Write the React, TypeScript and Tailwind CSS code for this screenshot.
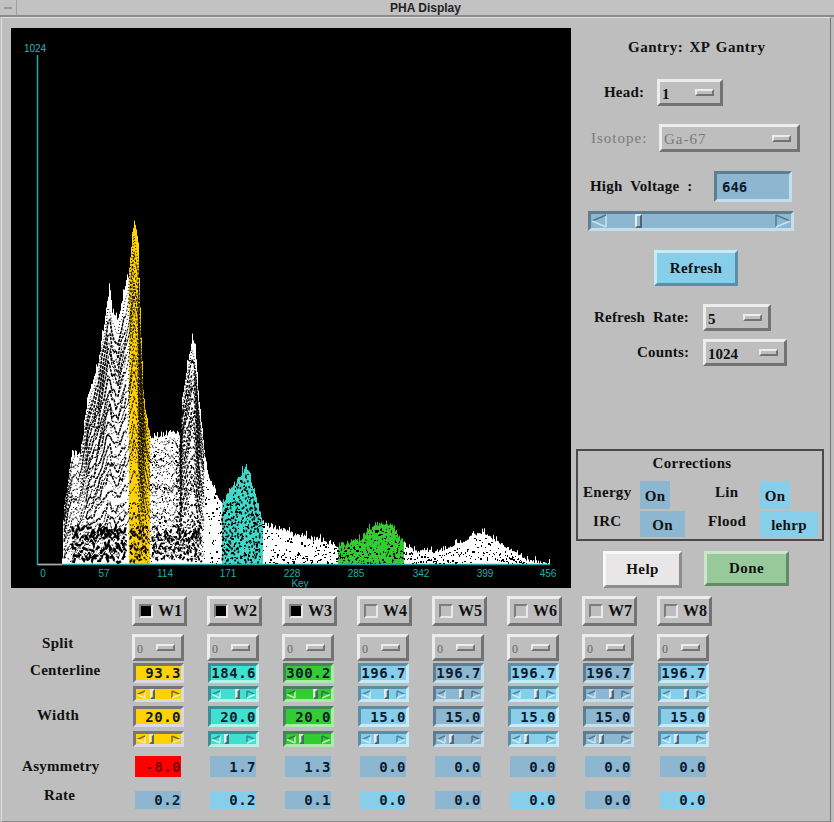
import { useMemo } from 'react'

const serif = "font-['Liberation_Serif',serif] font-bold text-[#111]"
const mono = "font-['DejaVu_Sans_Mono',monospace] font-bold text-[#0c1c30]"
const raised = 'border-t-[#ececec] border-l-[#ececec] border-r-[#737373] border-b-[#737373]'

type Tone = { bg: string; edge: string; arrowDark: string; arrowLight: string }

const TONES: Record<string, Tone> = {
  yellow: { bg: 'bg-[#ffd200]', edge: 'border-t-[#75757a] border-l-[#75757a] border-r-[#d8d8e8] border-b-[#d8d8e8]', arrowDark: '#7a6c20', arrowLight: '#f0e8c0' },
  teal: { bg: 'bg-[#40e0d0]', edge: 'border-t-[#3f8d92] border-l-[#3f8d92] border-r-[#b4f2ea] border-b-[#b4f2ea]', arrowDark: '#2f8f90', arrowLight: '#c4f8f0' },
  green: { bg: 'bg-[#32cd32]', edge: 'border-t-[#4d8063] border-l-[#4d8063] border-r-[#a8eca8] border-b-[#a8eca8]', arrowDark: '#2c7c40', arrowLight: '#b8f0b8' },
  sky: { bg: 'bg-[#87ceeb]', edge: 'border-t-[#5c8ea6] border-l-[#5c8ea6] border-r-[#c4ebf8] border-b-[#c4ebf8]', arrowDark: '#4f88a4', arrowLight: '#c8eef8' },
  steel: { bg: 'bg-[#8db7d0]', edge: 'border-t-[#5f7d92] border-l-[#5f7d92] border-r-[#c4dfec] border-b-[#c4dfec]', arrowDark: '#557890', arrowLight: '#c8e4f0' },
}

const WINDOWS = [
  { name: 'W1', on: true, tone: 'yellow', center: '93.3', width: '20.0', asym: '-8.0', rate: '0.2', rateTone: 'bg-[#8db7d0]', thumb: 14 },
  { name: 'W2', on: true, tone: 'teal', center: '184.6', width: '20.0', asym: '1.7', rate: '0.2', rateTone: 'bg-[#87ceeb]', thumb: 24 },
  { name: 'W3', on: true, tone: 'green', center: '300.2', width: '20.0', asym: '1.3', rate: '0.1', rateTone: 'bg-[#8db7d0]', thumb: 27 },
  { name: 'W4', on: false, tone: 'sky', center: '196.7', width: '15.0', asym: '0.0', rate: '0.0', rateTone: 'bg-[#87ceeb]', thumb: 23 },
  { name: 'W5', on: false, tone: 'steel', center: '196.7', width: '15.0', asym: '0.0', rate: '0.0', rateTone: 'bg-[#8db7d0]', thumb: 23 },
  { name: 'W6', on: false, tone: 'sky', center: '196.7', width: '15.0', asym: '0.0', rate: '0.0', rateTone: 'bg-[#87ceeb]', thumb: 23 },
  { name: 'W7', on: false, tone: 'steel', center: '196.7', width: '15.0', asym: '0.0', rate: '0.0', rateTone: 'bg-[#8db7d0]', thumb: 23 },
  { name: 'W8', on: false, tone: 'sky', center: '196.7', width: '15.0', asym: '0.0', rate: '0.0', rateTone: 'bg-[#87ceeb]', thumb: 23 },
]

// outline of the summed spectrum, in page pixels
const ENVELOPE: [number, number][] = [
  [62, 564], [63, 518], [65, 497], [72, 453], [80, 452], [83, 433], [86, 410], [88, 397], [98, 363], [106, 310],
  [109, 288], [112, 310], [118, 320], [122, 300], [128, 277], [134, 218], [138, 243], [140, 310], [143, 390],
  [145, 410], [150, 437], [167, 433], [180, 433], [182, 397], [187, 367], [192, 340], [195, 343], [198, 390],
  [202, 430], [207, 473], [222, 503], [223, 500], [237, 480], [246, 465], [253, 487], [260, 513], [263, 523],
  [277, 528], [287, 532], [303, 537], [323, 540], [338, 545], [360, 540], [370, 527], [382, 522], [393, 525],
  [403, 543], [413, 550], [437, 552], [460, 543], [473, 535], [483, 533], [500, 543], [527, 560], [549, 564],
]

function envelopeAt(x: number) {
  for (let i = 1; i < ENVELOPE.length; i++) {
    const [x0, y0] = ENVELOPE[i - 1]
    const [x1, y1] = ENVELOPE[i]
    if (x <= x1) return y0 + ((y1 - y0) * (x - x0)) / (x1 - x0)
  }
  return 564
}

type Trace = { points: string; width: number; dash?: string; stroke: string }

function Spectrum() {
  const { columns, traces, dots } = useMemo(() => {
    let seed = 17
    const rand = () => {
      seed = (seed * 16807) % 2147483647
      return seed / 2147483647
    }
    const columns: { x: number; y: number; fill: string }[] = []
    for (let x = 62; x <= 549; x++) {
      const fill = x >= 129 && x <= 149 ? '#ffd200' : x >= 222 && x <= 262 ? '#40d8c8' : x >= 338 && x <= 403 ? '#30cc30' : '#fff'
      const spike = rand() < 0.12 ? -4 : 0
      const y = envelopeAt(x) + (rand() - 0.5) * (x < 420 ? 6 : 3) + spike
      columns.push({ x, y: Math.min(y, 564), fill })
    }

    const traces: Trace[] = []
    const wiggle = (from: number, to: number, yAt: (x: number) => number, noise: number) => {
      const pts: string[] = []
      for (let x = from; x < to; x += 2) pts.push(`${x},${(yAt(x) + (rand() - 0.5) * noise).toFixed(1)}`)
      return pts.join(' ')
    }

    // stacked spectra: each one is the outline scaled down, drawn in broken black
    const dashes = ['2 2', '1 2', '3 1', '2 1', '1 3']
    for (let k = 0; k < 22; k++) {
      const level = 0.06 + k * 0.042
      traces.push({
        points: wiggle(64, 205, x => 564 - (564 - envelopeAt(x)) * level, 8),
        width: 1,
        dash: dashes[k % dashes.length],
        stroke: '#000',
      })
    }
    // the two big photopeak flanks read almost solid black
    for (let k = 0; k < 16; k++) {
      const level = 0.12 + k * 0.052
      traces.push({ points: wiggle(86, 128, x => 564 - (564 - envelopeAt(x)) * level, 9), width: 1.4, dash: '3 1', stroke: '#000' })
      traces.push({ points: wiggle(176, 202, x => 564 - (564 - envelopeAt(x)) * level, 9), width: 1.3, dash: '3 2', stroke: '#000' })
      traces.push({ points: wiggle(130, 148, x => 564 - (564 - envelopeAt(x)) * level, 8), width: 1, dash: '2 3', stroke: '#1a1400' })
    }
    // teal window: heavier specks so they hold up against the fill
    for (let k = 0; k < 14; k++) {
      const level = 0.05 + k * 0.062
      traces.push({ points: wiggle(222, 262, x => 564 - (564 - envelopeAt(x)) * level, 10), width: 1.6, dash: '2 4', stroke: '#000' })
    }
    // dark base of the left half with the lowest spectra showing through
    ;[558, 553, 548, 542, 536, 530].forEach(y => {
      traces.push({ points: wiggle(72, 128, () => y, 10), width: 2.4, dash: '6 2', stroke: '#000' })
      traces.push({ points: wiggle(130, 150, () => y, 10), width: 1.8, dash: '4 2', stroke: '#000' })
      traces.push({ points: wiggle(152, 204, () => y, 12), width: 1.8, dash: '4 3', stroke: '#000' })
    })
    ;[553, 541].forEach(y => {
      traces.push({ points: wiggle(68, 128, () => y, 7), width: 1, stroke: '#fff' })
      traces.push({ points: wiggle(128, 150, () => y + 2, 9), width: 1, stroke: '#ffd200' })
      traces.push({ points: wiggle(150, 205, () => y + 3, 7), width: 1, stroke: '#fff' })
    })

    const dots: { x: number; y: number; w: number; h: number }[] = []
    for (let x = 150; x <= 545; x++) {
      const perColumn = x >= 222 && x <= 262 ? 3 : x < 222 ? 2 : x >= 338 && x <= 403 ? 2.5 : x < 340 ? 1.2 : 0.8
      for (let n = 0; n < perColumn + rand() - 0.5; n++) {
        const top = envelopeAt(x)
        dots.push({ x, y: Math.round(top + 3 + rand() * (562 - top)), w: rand() < 0.3 ? 2 : 1, h: rand() < 0.4 ? 2 : 1 })
      }
    }
    return { columns, traces, dots }
  }, [])

  const ticks = [
    [43, '0'], [104, '57'], [165, '114'], [228, '171'], [292, '228'], [356, '285'], [421, '342'], [485, '399'], [548, '456'],
  ] as const

  return (
    <svg viewBox="11 28 560 560" className="block h-[560px] w-[560px] bg-black">
      {columns.map(c => (
        <rect key={c.x} x={c.x} y={c.y} width="1" height={564 - c.y} fill={c.fill} />
      ))}
      {traces.map((t, i) => (
        <polyline key={i} points={t.points} fill="none" stroke={t.stroke} strokeWidth={t.width} strokeDasharray={t.dash} />
      ))}
      {dots.map((d, i) => (
        <rect key={i} x={d.x} y={d.y} width={d.w} height={d.h} fill="#000" />
      ))}
      <line x1="37.5" y1="55" x2="37.5" y2="565" stroke="#1ca8a4" strokeWidth="1.5" />
      <line x1="37" y1="564.5" x2="550" y2="564.5" stroke="#1ca8a4" strokeWidth="1.5" />
      <line x1="38" y1="564.5" x2="62" y2="564.5" stroke="#a8a8a8" strokeWidth="1.5" />
      <text x="35" y="52" textAnchor="middle" fill="#2bb5b0" className="font-['Liberation_Sans',sans-serif] text-[10px]">1024</text>
      {ticks.map(([x, label]) => (
        <text key={label} x={x} y="577" textAnchor="middle" fill="#1cb0ac" className="font-['Liberation_Sans',sans-serif] text-[10px]">
          {label}
        </text>
      ))}
      <text x="300" y="587" textAnchor="middle" fill="#1cb0ac" className="font-['Liberation_Sans',sans-serif] text-[10px]">Key</text>
    </svg>
  )
}

function Arrow({ dir, dark, light, size = 'small' }: { dir: 'left' | 'right'; dark: string; light: string; size?: 'small' | 'large' }) {
  const w = size === 'large' ? 16 : 10
  const h = size === 'large' ? 14 : 9
  const d = dir === 'left' ? `M${w - 1} 1 L1 ${h / 2}` : `M1 1 L${w - 1} ${h / 2}`
  const lower = dir === 'left' ? `M1 ${h / 2} L${w - 1} ${h - 1}` : `M${w - 1} ${h / 2} L1 ${h - 1}`
  const closing = dir === 'left' ? `M${w - 1} 1 V${h - 1}` : `M1 1 V${h - 1}`
  return (
    <svg width={w} height={h} className="shrink-0">
      <path d={closing} stroke={dir === 'left' ? light : dark} strokeWidth="1.5" fill="none" />
      <path d={d} stroke={dark} strokeWidth="1.5" fill="none" />
      <path d={lower} stroke={light} strokeWidth="1.5" fill="none" />
    </svg>
  )
}

function Thumb({ left, tone, large }: { left: number; tone: string; large?: boolean }) {
  return (
    <span
      className={`absolute top-0 border-2 border-t-[#e8e8e8] border-l-[#e8e8e8] border-r-[#55636e] border-b-[#55636e] ${tone} ${
        large ? 'h-[14px] w-[7px]' : 'h-[10px] w-[5px]'
      }`}
      style={{ left }}
    />
  )
}

function Dropdown({ value, className, disabled, small }: { value: string; className: string; disabled?: boolean; small?: boolean }) {
  return (
    <div className={`flex items-center justify-between border-[3px] bg-[#bebebe] ${raised} ${className}`}>
      <span
        className={
          small
            ? "pl-[2px] pt-[2px] font-['Liberation_Serif',serif] text-[12px] text-[#666]"
            : `pl-[2px] pt-[3px] font-['Liberation_Serif',serif] text-[15px] leading-none ${disabled ? 'font-normal tracking-[1px] text-[#7a7a7a]' : 'font-bold text-[#111]'}`
        }
      >
        {value}
      </span>
      <span className={`mr-[6px] h-[7px] w-[19px] border-2 bg-[#bebebe] ${raised}`} />
    </div>
  )
}

function ToggleButton({ name, on }: { name: string; on: boolean }) {
  return (
    <div className={`flex h-[30px] w-[55px] items-center border-[3px] bg-[#bebebe] pl-[4px] ${raised}`}>
      <span
        className={`h-[14px] w-[14px] border-2 border-t-[#7d7d7d] border-l-[#7d7d7d] border-r-[#e8e8e8] border-b-[#e8e8e8] ${
          on ? 'bg-black' : 'bg-[#bebebe]'
        }`}
      />
      <span className={`ml-[5px] text-[16px] leading-none ${serif}`}>{name}</span>
    </div>
  )
}

function ValueField({ value, tone, height }: { value: string; tone: Tone; height: string }) {
  return (
    <div className={`flex w-[51px] items-center justify-end border-[3px] text-[14px] leading-none tracking-[0.5px] ${mono} ${tone.bg} ${tone.edge} ${height}`}>
      {value}
    </div>
  )
}

function SmallSlider({ tone, thumb }: { tone: Tone; thumb: number }) {
  return (
    <div className={`relative flex h-[16px] w-[51px] items-center justify-between border-[3px] ${tone.bg} ${tone.edge}`}>
      <Arrow dir="left" dark={tone.arrowDark} light={tone.arrowLight} />
      <Thumb left={thumb} tone={tone.bg} />
      <Arrow dir="right" dark={tone.arrowDark} light={tone.arrowLight} />
    </div>
  )
}

function ReadOut({ value, className }: { value: string; className: string }) {
  return <div className={`flex w-[46px] items-center justify-end text-[14px] leading-none tracking-[0.5px] ${mono} ${className}`}>{value}</div>
}

function Cell({ label, labelClass, height, className, children }: { label?: string; labelClass?: string; height: string; className?: string; children: React.ReactNode }) {
  return (
    <div className={`flex ${height} ${className ?? ''}`}>
      <div className={`w-[130px] shrink-0 text-[15px] leading-none tracking-[0.3px] ${serif} ${labelClass ?? ''}`}>{label}</div>
      {children}
    </div>
  )
}

function Slot({ children }: { children: React.ReactNode }) {
  return <div className="w-[75px] shrink-0">{children}</div>
}

function WindowsTable() {
  return (
    <div className="mt-[8px] flex flex-col">
      <Cell height="h-[30px]">
        {WINDOWS.map(w => (
          <Slot key={w.name}><ToggleButton name={w.name} on={w.on} /></Slot>
        ))}
      </Cell>
      <Cell height="h-[27px]" className="mt-[8px]" label="Split" labelClass="pl-[40px] pt-[2px]">
        {WINDOWS.map(w => (
          <Slot key={w.name}><Dropdown value="0" small className="h-[27px] w-[52px]" /></Slot>
        ))}
      </Cell>
      <Cell height="h-[20px]" className="mt-[2px]" label="Centerline" labelClass="pl-[28px]">
        {WINDOWS.map(w => (
          <Slot key={w.name}><div className="pl-[1px]"><ValueField value={w.center} tone={TONES[w.tone]} height="h-[20px]" /></div></Slot>
        ))}
      </Cell>
      <Cell height="h-[16px]" className="mt-[3px]">
        {WINDOWS.map(w => (
          <Slot key={w.name}><div className="pl-[1px]"><SmallSlider tone={TONES[w.tone]} thumb={w.thumb} /></div></Slot>
        ))}
      </Cell>
      <Cell height="h-[21px]" className="mt-[4px]" label="Width" labelClass="pl-[35px] pt-[2px]">
        {WINDOWS.map(w => (
          <Slot key={w.name}><div className="pl-[1px]"><ValueField value={w.width} tone={TONES[w.tone]} height="h-[21px]" /></div></Slot>
        ))}
      </Cell>
      <Cell height="h-[16px]" className="mt-[4px]">
        {WINDOWS.map(w => (
          <Slot key={w.name}><div className="pl-[1px]"><SmallSlider tone={TONES[w.tone]} thumb={13} /></div></Slot>
        ))}
      </Cell>
      <Cell height="h-[21px]" className="mt-[9px]" label="Asymmetry" labelClass="pl-[20px] pt-[3px]">
        {WINDOWS.map(w => (
          <Slot key={w.name}>
            <div className="pl-[3px]">
              <ReadOut value={w.asym} className={`h-[21px] ${w.asym === '-8.0' ? 'bg-[#ff0000] text-[#7a0a10]' : 'bg-[#8db7d0]'}`} />
            </div>
          </Slot>
        ))}
      </Cell>
      <Cell height="h-[18px]" className="mt-[14px]" label="Rate" labelClass="pl-[42px] -mt-[3px]">
        {WINDOWS.map(w => (
          <Slot key={w.name}>
            <div className="pl-[3px]"><ReadOut value={w.rate} className={`h-[18px] ${w.rateTone}`} /></div>
          </Slot>
        ))}
      </Cell>
    </div>
  )
}

function Corrections() {
  const label = `text-[15px] leading-none tracking-[0.3px] ${serif}`
  const value = `flex items-center justify-center pt-[2px] text-[15px] leading-none tracking-[0.3px] ${serif} text-[#0c2238]`
  return (
    <div className="ml-[1px] mt-[83px] flex h-[92px] w-[248px] flex-col border-2 border-[#4a4a4a]">
      <div className={`pr-[16px] pt-[5px] text-center ${label}`}>Corrections</div>
      <div className="mt-[10px] flex h-[28px]">
        <div className={`w-[62px] pl-[5px] pt-[4px] ${label}`}>Energy</div>
        <div className={`h-[28px] w-[30px] bg-[#8db7d0] ${value}`}>On</div>
        <div className={`w-[90px] pl-[45px] pt-[4px] ${label}`}>Lin</div>
        <div className={`h-[28px] w-[30px] bg-[#87ceeb] ${value}`}>On</div>
      </div>
      <div className="mt-[2px] flex h-[26px]">
        <div className={`w-[62px] pl-[15px] pt-[3px] ${label}`}>IRC</div>
        <div className={`h-[26px] w-[45px] bg-[#8db7d0] ${value}`}>On</div>
        <div className={`w-[75px] pl-[23px] pt-[3px] ${label}`}>Flood</div>
        <div className={`h-[26px] w-[58px] bg-[#87ceeb] ${value}`}>lehrp</div>
      </div>
    </div>
  )
}

function ControlPanel() {
  const label = `text-[15px] leading-none tracking-[0.2px] [word-spacing:4px] ${serif}`
  return (
    <div className="flex w-[259px] flex-col pl-[4px]">
      <div className={`mt-[22px] pl-[53px] text-[15px] leading-none tracking-[0.5px] [word-spacing:2px] ${serif}`}>Gantry: XP Gantry</div>
      <div className="mt-[24px] flex h-[27px] items-center">
        <span className={`ml-[29px] w-[53px] ${label}`}>Head:</span>
        <Dropdown value="1" className="h-[27px] w-[66px]" />
      </div>
      <div className="mt-[18px] flex h-[28px] items-center">
        <span className="ml-[16px] w-[68px] font-['Liberation_Serif',serif] text-[15px] leading-none tracking-[1px] text-[#7a7a7a]">Isotope:</span>
        <Dropdown value="Ga-67" disabled className="h-[28px] w-[141px]" />
      </div>
      <div className="mt-[19px] flex h-[31px] items-center">
        <span className={`ml-[15px] w-[124px] ${label}`}>High Voltage :</span>
        <div className={`flex h-[31px] w-[78px] items-center border-[3px] pl-[5px] text-[14px] leading-none ${mono} ${TONES.steel.bg} ${TONES.steel.edge}`}>646</div>
      </div>
      <div className={`relative ml-[13px] mt-[9px] flex h-[20px] w-[206px] items-center justify-between border-[3px] ${TONES.steel.bg} ${TONES.steel.edge}`}>
        <Arrow dir="left" size="large" dark={TONES.steel.arrowDark} light={TONES.steel.arrowLight} />
        <Thumb left={44} tone={TONES.steel.bg} large />
        <Arrow dir="right" size="large" dark={TONES.steel.arrowDark} light={TONES.steel.arrowLight} />
      </div>
      <div className={`ml-[79px] mt-[19px] flex h-[36px] w-[84px] items-center justify-center border-[3px] bg-[#87ceeb] text-[15px] leading-none tracking-[0.4px] border-t-[#c4ebf8] border-l-[#c4ebf8] border-r-[#5c8ea6] border-b-[#5c8ea6] ${serif} text-[#0c2238]`}>
        Refresh
      </div>
      <div className="mt-[18px] flex h-[27px] items-center">
        <span className={`ml-[19px] w-[109px] ${label}`}>Refresh Rate:</span>
        <Dropdown value="5" className="h-[27px] w-[68px]" />
      </div>
      <div className="mt-[8px] flex h-[27px] items-center">
        <span className={`ml-[62px] w-[66px] ${label}`}>Counts:</span>
        <Dropdown value="1024" className="h-[27px] w-[84px]" />
      </div>
      <Corrections />
      <div className="mt-[10px] flex items-start">
        <div className={`ml-[28px] flex h-[37px] w-[79px] items-center justify-center border-[3px] bg-[#e8e6e6] text-[15px] leading-none tracking-[0.4px] border-t-[#f8f8f8] border-l-[#f8f8f8] border-r-[#8c8c8c] border-b-[#8c8c8c] ${serif}`}>
          Help
        </div>
        <div className={`ml-[22px] flex h-[35px] w-[85px] items-center justify-center border-[3px] bg-[#97c99a] text-[15px] leading-none tracking-[0.4px] border-t-[#cce6cc] border-l-[#cce6cc] border-r-[#648a68] border-b-[#648a68] ${serif}`}>
          Done
        </div>
      </div>
    </div>
  )
}

export default function App() {
  return (
    <div className="flex h-[822px] w-[834px] flex-col overflow-hidden bg-[#bebebe]">
      {/* window manager title bar */}
      <div className="flex h-[17px] shrink-0 items-center border-b-2 border-[#8a8a8a] bg-[#c2c2c2]">
        <div className="flex h-[15px] w-[17px] shrink-0 items-center justify-center border-r border-[#a0a0a0]">
          <span className="h-[2px] w-[8px] bg-[#999]" />
        </div>
        <div className="flex-1 pt-[1px] text-center font-['Liberation_Sans',sans-serif] text-[12px] font-bold leading-none text-[#222]">PHA Display</div>
      </div>
      {/* client area */}
      <div className="ml-[1px] mr-[3px] flex flex-1 flex-col border-x border-b border-t border-x-[#e0e0e0] border-b-[#8a8a8a] border-t-[#e0e0e0] border-r-[#777]">
        <div className="flex">
          <div className="ml-[9px] mt-[10px] shrink-0"><Spectrum /></div>
          <ControlPanel />
        </div>
        <WindowsTable />
      </div>
    </div>
  )
}
